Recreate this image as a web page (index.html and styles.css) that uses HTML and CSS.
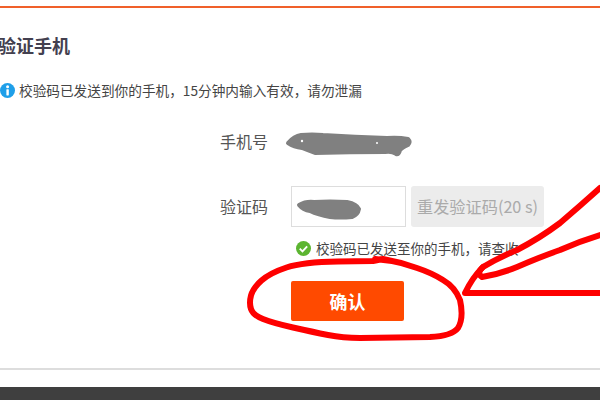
FILE: index.html
```html
<!DOCTYPE html>
<html lang="zh">
<head>
<meta charset="utf-8">
<title>验证手机</title>
<link rel="stylesheet" href="styles.css">
</head>
<body>
<div class="page">
  <main class="panel">
    <h1 class="title">验证手机</h1>
    <p class="notice">
      <svg class="icon" viewBox="0 0 16 16"><circle cx="8" cy="8" r="8" fill="#1f9fe9"/><rect x="6.8" y="6.6" width="2.6" height="6.6" rx=".6" fill="#fff"/><circle cx="8.1" cy="4.1" r="1.6" fill="#fff"/></svg>
      <span>校验码已发送到你的手机，15分钟内输入有效，请勿泄漏</span>
    </p>
    <div class="form">
      <div class="row row-phone"><span class="label">手机号</span></div>
      <div class="row row-code">
        <span class="label">验证码</span>
        <div class="input"></div>
        <div class="resend">重发验证码(20 s)</div>
      </div>
      <p class="hint">
        <svg class="icon" viewBox="0 0 16 16"><circle cx="8" cy="8" r="8" fill="#5cb531"/><path d="M4 8.2l2.9 2.9 5-5.4" fill="none" stroke="#fff" stroke-width="2"/></svg>
        <span>校验码已发送至你的手机，请查收</span>
      </p>
      <div class="submit">确认</div>
    </div>
  </main>
  <div class="rule"></div>
  <footer class="footer"></footer>
  <svg class="marks" viewBox="0 0 600 400">
    <path class="blot" d="M288 143Q294 136 301 135Q312 134 323 135Q355 137 387 138Q398 137 408 139Q411 142 408 145Q402 148 400 150Q399 155 396 154Q392 151 385 152Q350 152 315 153Q307 150 302 148Q294 147 288 143Z"/>
    <path class="blot" d="M299 205Q306 201 314 202Q330 201 347 202Q357 204 359 209Q358 215 352 217Q340 218 330 217Q318 215 310 211Q303 210 299 205Z"/>
    <circle class="speck" cx="302" cy="141" r="1.2"/>
    <circle class="speck" cx="377" cy="143" r="1"/>
    <path class="ink" d="M375 259L392 261M383 259L373 261L338 261.5Q303 262 286.5 267.5Q270 273 261.5 280.5Q253 288 251 295.5Q249 303 251 309Q253 315 263 319Q273 323 293 327.5Q313 332 328 335Q343 338 360 338L430 337Q452 336 458 328Q464 318 460 300Q455 287 443 280Q432 273 417 268Q400 262 383 259"/>
    <path class="ink" d="M600 293L465 293Q472 278 483 267Q498 258 517 250Q540 238 560 223Q580 206 600 188"/>
    <path class="ink" d="M483 267Q476 273 482 277Q500 274 517 267Q540 257 560 250Q580 241 600 235"/>
  </svg>
</div>
</body>
</html>
```
FILE: styles.css
```css
html, body {
  margin: 0;
  padding: 0;
}
body {
  font-family: "Noto Sans CJK SC", "Liberation Sans", sans-serif;
  color: #555;
  background: #fff;
}
.page {
  position: relative;
  width: 600px;
  height: 400px;
  overflow: hidden;
  background: #fff;
}
.panel {
  margin-top: 6px;
  border-top: 2px solid #f0602a;
  height: 362px;
  box-sizing: border-box;
}
.title {
  margin: 25px 0 0 -2px;
  font-size: 18px;
  line-height: 24px;
  font-weight: 700;
  color: #43404f;
}
.notice {
  display: flex;
  align-items: center;
  gap: 4px;
  margin: 23px 0 0;
  font-size: 13.66px;
  line-height: 20px;
  color: #444;
  white-space: nowrap;
}
.icon {
  width: 15px;
  height: 15px;
  flex: none;
}
.form {
  margin-left: 220px;
}
.row {
  display: flex;
  align-items: center;
}
.row-phone {
  height: 24px;
  margin-top: 30px;
}
.row-code {
  margin-top: 32px;
  height: 41px;
}
.label {
  width: 71px;
  flex: none;
  padding-bottom: 2px;
  font-size: 16px;
  line-height: 24px;
  color: #555;
}
.input {
  width: 113px;
  height: 39px;
  border: 1px solid #ddd;
  margin-right: 5px;
  flex: none;
}
.resend {
  width: 133px;
  height: 41px;
  flex: none;
  border-radius: 3px;
  background: #ececec;
  color: #aaa;
  font-size: 16.2px;
  line-height: 41px;
  text-align: center;
  white-space: nowrap;
}
.hint {
  display: flex;
  align-items: center;
  gap: 5px;
  margin: 11px 0 0 76px;
  font-size: 13.5px;
  line-height: 20px;
  color: #444;
  white-space: nowrap;
}
.submit {
  width: 113px;
  height: 40px;
  margin: 23px 0 0 71px;
  border-radius: 2px;
  background: #ff4a00;
  color: #fff;
  font-size: 18px;
  font-weight: 700;
  line-height: 40px;
  text-align: center;
}
.rule {
  height: 2px;
  background: #ddd;
}
.footer {
  margin-top: 17px;
  height: 13px;
  background: #3f3f3f;
}
.marks {
  position: absolute;
  left: 0;
  top: 0;
  width: 600px;
  height: 400px;
}
.blot {
  fill: #808080;
  stroke: #808080;
  stroke-width: 4;
  stroke-linejoin: round;
}
.speck {
  fill: #fff;
}
.ink {
  fill: none;
  stroke: #fe0000;
  stroke-width: 6;
  stroke-linejoin: round;
  stroke-linecap: round;
}
```
